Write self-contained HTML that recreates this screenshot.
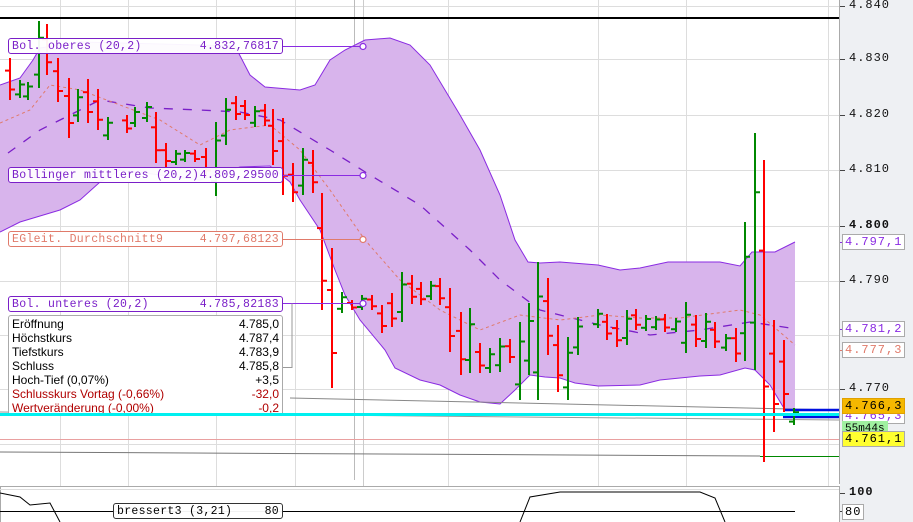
<!DOCTYPE html>
<html><head><meta charset="utf-8"><style>
html,body{margin:0;padding:0;background:#fff;}
body{width:913px;height:522px;overflow:hidden;position:relative;font-family:"Liberation Mono","DejaVu Sans Mono",monospace;}
svg{position:absolute;left:0;top:0;}
.lbl{position:absolute;height:16px;line-height:16px;font-size:11.5px;background:rgba(255,255,255,0.95);border:1px solid;border-radius:3px;box-sizing:border-box;padding:0 3px;white-space:pre;letter-spacing:0.3px;}
.ax{position:absolute;left:849px;font-size:12px;color:#111;letter-spacing:1px;}
.bx{position:absolute;left:842px;height:16px;line-height:15px;font-size:12px;border:1px solid #aaa;box-sizing:border-box;padding:0 2px;letter-spacing:1px;}
.info{position:absolute;left:8px;top:315px;width:275px;height:101px;background:#fff;border:1px solid #aaa;border-radius:3px;font-family:"Liberation Sans","DejaVu Sans",sans-serif;font-size:12px;overflow:hidden;box-sizing:border-box;padding-top:1px;}
.info div{height:14px;line-height:14px;padding:0 3px;display:flex;justify-content:space-between;}
.r{color:#b00000;}
</style></head><body>
<svg width="913" height="522" id="s">
<rect x="840" y="0" width="73" height="522" fill="#eef0f3"/>
<g stroke="#ddd" stroke-width="1">
<line x1="0" x2="839" y1="6.5" y2="6.5"/><line x1="0" x2="839" y1="59.5" y2="59.5"/><line x1="0" x2="839" y1="115.5" y2="115.5"/><line x1="0" x2="839" y1="170.5" y2="170.5"/><line x1="0" x2="839" y1="226.5" y2="226.5"/><line x1="0" x2="839" y1="281.5" y2="281.5"/><line x1="0" x2="839" y1="335.5" y2="335.5"/><line x1="0" x2="839" y1="389.5" y2="389.5"/><line x1="0" x2="839" y1="444.5" y2="444.5"/>
<line x1="60.5" x2="60.5" y1="0" y2="522"/><line x1="128.5" x2="128.5" y1="0" y2="522"/><line x1="216.5" x2="216.5" y1="0" y2="522"/><line x1="295.5" x2="295.5" y1="0" y2="522"/><line x1="598.5" x2="598.5" y1="0" y2="522"/><line x1="828.5" x2="828.5" y1="0" y2="522"/><line x1="448.5" x2="448.5" y1="0" y2="522"/><line x1="686.5" x2="686.5" y1="0" y2="522"/>
</g>
<line x1="354.5" x2="354.5" y1="0" y2="480" stroke="#bbb"/>
<line x1="363.5" x2="363.5" y1="0" y2="522" stroke="#ccc"/>
<polygon fill="#d8b4ec" stroke="none" points="0,85 20,78 33,60 40,48 80,42 160,44 235,46 250,75 265,87 300,90 315,85 330,60 345,50 365,40 390,38 410,45 430,65 460,115 480,150 500,195 515,240 528,262 540,263 560,262 598,265 620,270 640,268 668,262 720,262 740,266 752,252 775,252 795,242 795,410 785,410 770,385 755,370 745,368 720,375 700,376 680,378 660,380 640,385 598,386 575,383 560,378 545,377 530,375 515,390 500,404 480,402 460,395 440,385 420,380 395,368 385,350 360,320 345,295 335,270 320,230 300,200 290,182 270,166 240,167 200,180 160,175 120,170 100,182 80,200 60,210 40,216 20,222 0,232"/>
<polyline fill="none" stroke="#8a2be2" stroke-width="1" points="0,85 20,78 33,60 40,48 80,42 160,44 235,46 250,75 265,87 300,90 315,85 330,60 345,50 365,40 390,38 410,45 430,65 460,115 480,150 500,195 515,240 528,262 540,263 560,262 598,265 620,270 640,268 668,262 720,262 740,266 752,252 775,252 795,242"/>
<polyline fill="none" stroke="#8a2be2" stroke-width="1" points="795,410 785,410 770,385 755,370 745,368 720,375 700,376 680,378 660,380 640,385 598,386 575,383 560,378 545,377 530,375 515,390 500,404 480,402 460,395 440,385 420,380 395,368 385,350 360,320 345,295 335,270 320,230 300,200 290,182 270,166 240,167 200,180 160,175 120,170 100,182 80,200 60,210 40,216 20,222 0,232"/>
<polyline fill="none" stroke="#7a1fc8" stroke-width="1.3" stroke-dasharray="9,10" points="8,153 40,130 100,100 150,108 200,110 240,112 280,120 330,150 370,175 420,205 470,250 500,280 540,310 600,325 650,335 700,330 750,322 790,328"/>
<polyline fill="none" stroke="#e07a6a" stroke-width="1" stroke-dasharray="3,3" points="0,123 30,110 50,85 80,90 120,105 160,120 200,145 230,130 270,125 300,150 330,190 365,240 400,280 440,310 480,330 520,315 560,320 600,315 640,318 680,318 740,310 760,315 795,345"/>
<line x1="0" x2="839" y1="18" y2="18" stroke="#000" stroke-width="2"/>
<line x1="290" x2="839" y1="398" y2="410" stroke="#888"/>
<line x1="0" x2="839" y1="412" y2="420" stroke="#999"/>
<line x1="0" x2="839" y1="439.5" y2="439.5" stroke="#e9a0a0"/>
<line x1="0" x2="760" y1="452" y2="456" stroke="#777"/>
<line x1="760" x2="839" y1="456.5" y2="456.5" stroke="#080"/>
<line x1="0" x2="839" y1="414.5" y2="414.5" stroke="#00f0f0" stroke-width="3"/>
<line x1="783" x2="839" y1="410" y2="410" stroke="#0010e0" stroke-width="2.5"/>
<line x1="783" x2="839" y1="417" y2="417" stroke="#0010e0" stroke-width="2.5"/>
<g id="bars" stroke-width="2"></g>
<g stroke="#8a2be2" fill="none"><line x1="283" x2="363" y1="46.5" y2="46.5"/><line x1="283" x2="363" y1="175.5" y2="175.5"/><line x1="283" x2="363" y1="303.5" y2="303.5"/><polyline points="283,367.5 292,367.5 292,303.5" stroke="#999"/></g>
<line x1="283" x2="363" y1="239.5" y2="239.5" stroke="#e07a6a"/>
<g fill="#fff" stroke-width="1.2"><circle cx="363" cy="46.5" r="3" stroke="#8a2be2"/><circle cx="363" cy="175.5" r="3" stroke="#8a2be2"/><circle cx="363" cy="239.5" r="3" stroke="#e07a6a"/><circle cx="363" cy="303.5" r="3" stroke="#8a2be2"/></g>
<line x1="839.5" x2="839.5" y1="0" y2="484" stroke="#aaa"/>
<rect x="0.5" y="486.5" width="839" height="40" fill="#fff" stroke="#aaa"/>
<line x1="0" x2="839" y1="489.5" y2="489.5" stroke="#ddd"/>
<line x1="0" x2="795" y1="511.5" y2="511.5" stroke="#000"/>
<polyline fill="none" stroke="#000" points="0,493 20,497 30,505 50,503 60,522" />
<polyline fill="none" stroke="#000" points="520,522 530,497 560,492 700,492 715,498 725,522"/>
<g stroke="#444"><line x1="840" x2="844" y1="242.5" y2="242.5" stroke="#8a2be2"/><line x1="840" x2="844" y1="329.5" y2="329.5" stroke="#8a2be2"/><line x1="840" x2="844" y1="350.5" y2="350.5" stroke="#e07a6a"/><line x1="840" x2="845" y1="389.5" y2="389.5"/><line x1="840" x2="845" y1="6.5" y2="6.5"/><line x1="840" x2="845" y1="59.5" y2="59.5"/><line x1="840" x2="845" y1="115.5" y2="115.5"/><line x1="840" x2="845" y1="170.5" y2="170.5"/><line x1="840" x2="845" y1="226.5" y2="226.5"/><line x1="840" x2="845" y1="281.5" y2="281.5"/><line x1="840" x2="845" y1="493.5" y2="493.5"/><line x1="840" x2="844" y1="511.5" y2="511.5"/></g>
</svg>
<script>
var B=[[10,'r',58,100],[20,'g',80,98],[28,'g',82,100],[39,'g',21,88],[47,'r',24,75],[58,'r',58,102],[69,'r',78,138],[78,'g',89,122],[88,'r',79,123],[98,'r',89,130],[108,'g',117,140],[127,'r',115,133],[135,'g',107,127],[147,'g',102,122],[156,'r',112,163],[166,'r',143,167],[176,'g',150,165],[185,'g',150,162],[195,'r',150,162],[206,'r',148,178],[216,'g',122,196],[226,'g',98,145],[236,'r',96,120],[245,'r',100,120],[255,'g',106,127],[265,'r',104,126],[273,'r',109,165],[283,'r',118,195],[293,'r',163,202],[303,'g',148,195],[313,'r',150,193],[322,'r',193,310],[332,'r',248,388],[342,'g',292,313],[352,'r',300,310],[362,'g',295,310],[372,'r',295,310],[382,'r',305,333],[392,'r',293,327],[402,'g',272,322],[412,'r',275,304],[421,'r',282,305],[431,'g',281,300],[440,'r',278,305],[450,'r',288,352],[461,'r',312,375],[470,'g',308,373],[480,'r',343,373],[490,'g',348,373],[500,'g',338,372],[510,'r',339,363],[520,'g',322,400],[529,'g',303,375],[538,'g',262,400],[548,'r',278,355],[558,'r',325,392],[568,'g',337,400],[578,'g',317,355],[598,'g',309,328],[607,'r',314,340],[617,'r',320,347],[627,'g',310,345],[636,'r',309,330],[646,'g',315,331],[656,'g',316,330],[665,'r',314,332],[676,'g',318,332],[686,'g',302,353],[696,'r',315,347],[706,'g',313,348],[715,'r',322,348],[726,'g',334,351],[736,'r',328,362],[745,'g',222,361],[755,'g',133,370],[764,'r',160,462],[774,'r',320,432],[784,'r',340,412],[794,'g',408,425]];
var g=document.getElementById('bars'),h='';
B.forEach(function(b,i){var c=b[1]=='r'?'#f00':'#080';var o=b[1]=='r'?b[2]+(b[3]-b[2])*0.3:b[2]+(b[3]-b[2])*0.8;var cl=b[1]=='r'?b[2]+(b[3]-b[2])*0.75:b[2]+(b[3]-b[2])*0.25;
h+='<line x1="'+b[0]+'" x2="'+b[0]+'" y1="'+b[2]+'" y2="'+b[3]+'" stroke="'+c+'"/><line x1="'+(b[0]-5)+'" x2="'+b[0]+'" y1="'+o+'" y2="'+o+'" stroke="'+c+'"/><line x1="'+b[0]+'" x2="'+(b[0]+5)+'" y1="'+cl+'" y2="'+cl+'" stroke="'+c+'"/>';});
g.innerHTML=h;
</script>
<div class="lbl" style="left:8px;top:38px;width:275px;color:#7a1fc8;border-color:#7a1fc8;display:flex;justify-content:space-between;"><span>Bol. oberes (20,2)</span><span>4.832,76817</span></div>
<div class="lbl" style="left:8px;top:167px;width:275px;color:#7a1fc8;border-color:#7a1fc8;display:flex;justify-content:space-between;"><span>Bollinger mittleres (20,2)</span><span>4.809,29500</span></div>
<div class="lbl" style="left:8px;top:231px;width:275px;color:#e07a6a;border-color:#e07a6a;display:flex;justify-content:space-between;"><span>EGleit. Durchschnitt9</span><span>4.797,68123</span></div>
<div class="lbl" style="left:8px;top:296px;width:275px;color:#7a1fc8;border-color:#7a1fc8;display:flex;justify-content:space-between;"><span>Bol. unteres (20,2)</span><span>4.785,82183</span></div>
<div class="info">
<div><span>Eröffnung</span><span>4.785,0</span></div>
<div><span>Höchstkurs</span><span>4.787,4</span></div>
<div><span>Tiefstkurs</span><span>4.783,9</span></div>
<div><span>Schluss</span><span>4.785,8</span></div>
<div><span>Hoch-Tief (0,07%)</span><span>+3,5</span></div>
<div class="r"><span>Schlusskurs Vortag (-0,66%)</span><span>-32,0</span></div>
<div class="r"><span>Wertveränderung (-0,00%)</span><span>-0,2</span></div>
</div>
<div style="position:absolute;left:0;top:413px;width:839px;height:3px;background:#00f0f0;"></div>
<div class="lbl" style="left:113px;top:503px;width:170px;color:#000;border-color:#333;display:flex;justify-content:space-between;"><span>bressert3 (3,21)</span><span>80</span></div>
<div class="ax" style="top:-2px">4.840</div>
<div class="ax" style="top:51px">4.830</div>
<div class="ax" style="top:107px">4.820</div>
<div class="ax" style="top:162px">4.810</div>
<div class="ax" style="top:218px;font-weight:bold">4.800</div>
<div class="ax" style="top:273px">4.790</div>
<div class="ax" style="top:381px">4.770</div>
<div class="ax" style="top:485px;font-weight:bold">100</div>
<div class="bx" style="top:234px;color:#8a2be2;background:#fff">4.797,1</div>
<div class="bx" style="top:321px;color:#8a2be2;background:#fff">4.781,2</div>
<div class="bx" style="top:342px;color:#e07a6a;background:#fff">4.777,3</div>
<div class="bx" style="top:408px;color:#8a2be2;background:#fff">4.765,3</div>
<div class="bx" style="top:398px;color:#000;background:#f5b800;border-color:#e0a000">4.766,3</div>
<div class="bx" style="top:421px;color:#000;background:#a0f0a0;border-color:#a0f0a0;font-size:11px;letter-spacing:0">55m44s</div>
<div class="bx" style="top:431px;color:#000;background:#ffff30;border-color:#aaa">4.761,1</div>
<div class="bx" style="top:504px;color:#000;background:#fff">80</div>
</body></html>
